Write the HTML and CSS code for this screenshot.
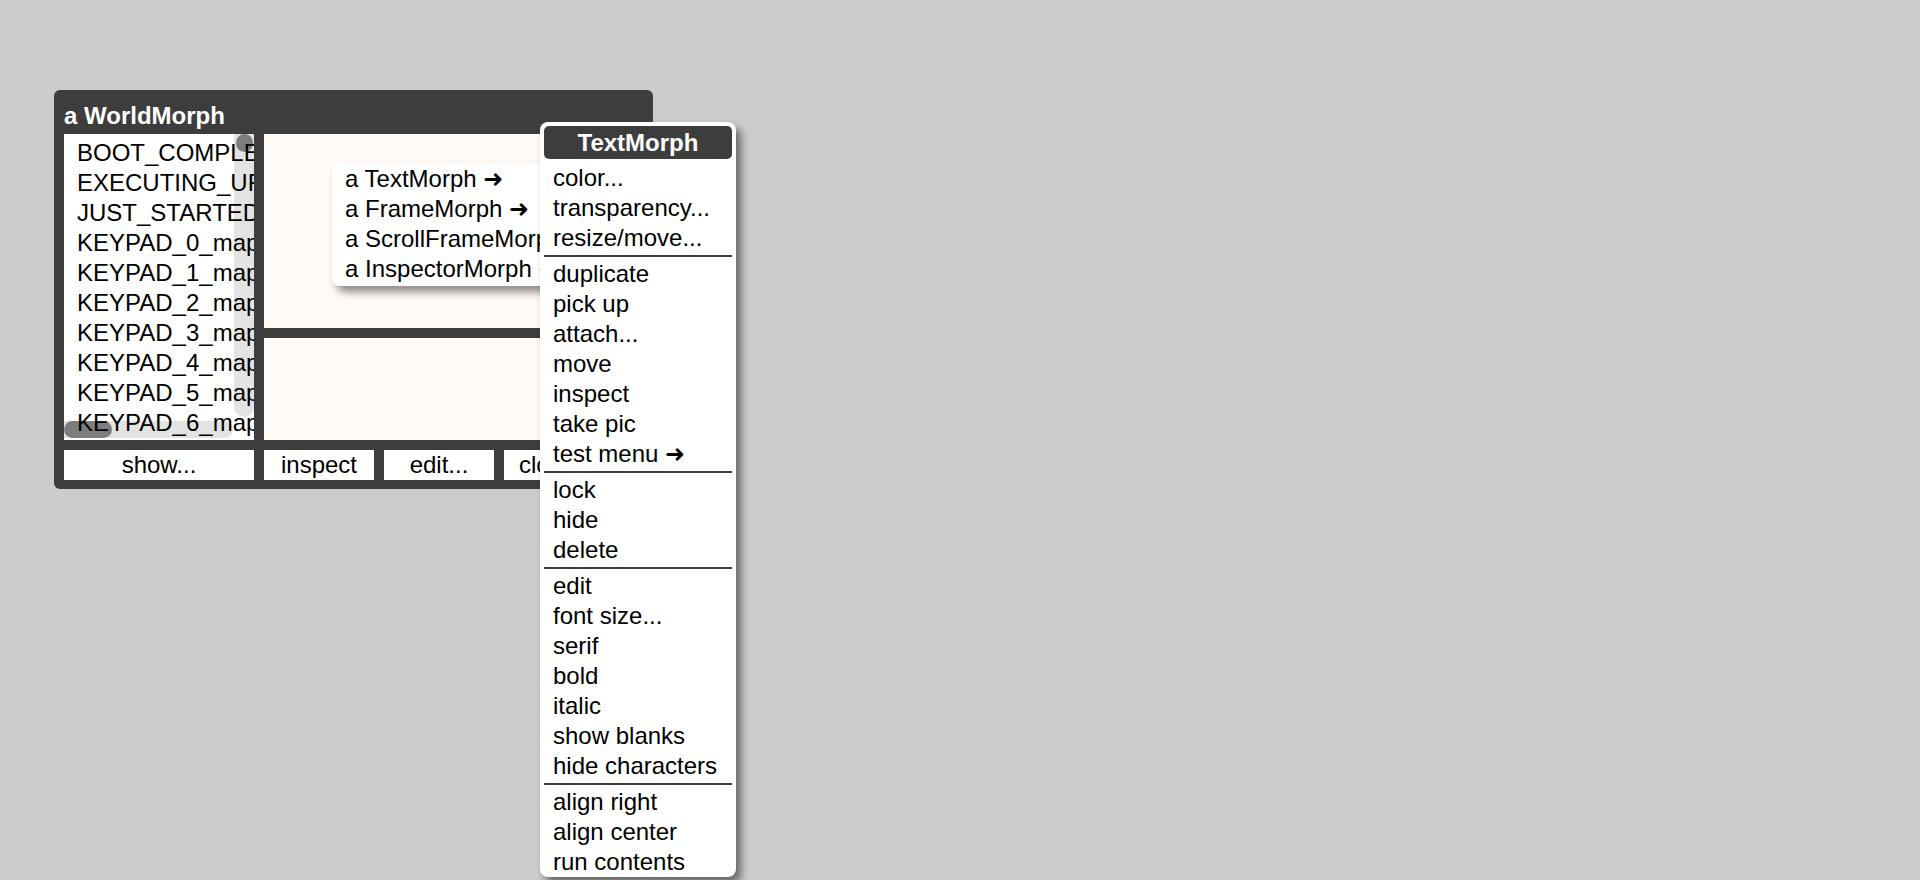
FILE: index.html
```html
<!DOCTYPE html>
<html>
<head>
<meta charset="utf-8">
<link rel="stylesheet" href="styles.css">
</head>
<body>
<div class="world">
  <div class="inspector">
    <div class="title">a WorldMorph</div>
    <div class="main">
      <div class="list">
        <div class="rows">
          <div class="row">BOOT_COMPLETED_ACTION</div>
          <div class="row">EXECUTING_URL_ACTION</div>
          <div class="row">JUST_STARTED_ACTION</div>
          <div class="row">KEYPAD_0_mappedToThaiKeyboard</div>
          <div class="row">KEYPAD_1_mappedToThaiKeyboard</div>
          <div class="row">KEYPAD_2_mappedToThaiKeyboard</div>
          <div class="row">KEYPAD_3_mappedToThaiKeyboard</div>
          <div class="row">KEYPAD_4_mappedToThaiKeyboard</div>
          <div class="row">KEYPAD_5_mappedToThaiKeyboard</div>
          <div class="row">KEYPAD_6_mappedToThaiKeyboard</div>
        </div>
        <div class="vtrack"><div class="vthumb"></div></div>
        <div class="htrack"><div class="hthumb"></div></div>
      </div>
      <div class="panes">
        <div class="pane pane-top"></div>
        <div class="pane pane-bottom"></div>
      </div>
    </div>
    <div class="buttons">
      <div class="btn btn-show">show...</div>
      <div class="btn btn-fixed">inspect</div>
      <div class="btn btn-fixed">edit...</div>
      <div class="btn btn-close">close</div>
    </div>
  </div>

  <div class="submenu">
    <div class="item">a TextMorph <span class="arrow">➜</span></div>
    <div class="item">a FrameMorph <span class="arrow">➜</span></div>
    <div class="item">a ScrollFrameMorph <span class="arrow">➜</span></div>
    <div class="item">a InspectorMorph <span class="arrow">➜</span></div>
  </div>

  <div class="menu">
    <div class="menu-title">TextMorph</div>
    <div class="item">color...</div>
    <div class="item">transparency...</div>
    <div class="item">resize/move...</div>
    <div class="sep"></div>
    <div class="item">duplicate</div>
    <div class="item">pick up</div>
    <div class="item">attach...</div>
    <div class="item">move</div>
    <div class="item">inspect</div>
    <div class="item">take pic</div>
    <div class="item">test menu <span class="arrow">➜</span></div>
    <div class="sep"></div>
    <div class="item">lock</div>
    <div class="item">hide</div>
    <div class="item">delete</div>
    <div class="sep"></div>
    <div class="item">edit</div>
    <div class="item">font size...</div>
    <div class="item">serif</div>
    <div class="item">bold</div>
    <div class="item">italic</div>
    <div class="item">show blanks</div>
    <div class="item">hide characters</div>
    <div class="sep"></div>
    <div class="item">align right</div>
    <div class="item">align center</div>
    <div class="item">run contents</div>
  </div>
</div>
</body>
</html>
```

FILE: styles.css
```css
html, body {
  margin: 0;
  padding: 0;
  background: #cccccc;
  width: 1920px;
  height: 880px;
  overflow: hidden;
}

.world {
  position: relative;
  width: 1920px;
  height: 880px;
  padding-top: 90px;
  padding-left: 54px;
  box-sizing: border-box;
  font-family: "Liberation Sans", Arial, Helvetica, sans-serif;
  font-size: 24px;
  color: #000;
}

.inspector {
  width: 599px;
  box-sizing: border-box;
  background: #3d3d3d;
  border-radius: 6px;
  padding: 10px 10px 9px 10px;
}

.title {
  color: #fff;
  font-weight: bold;
  line-height: 30px;
  height: 30px;
  margin-bottom: 4px;
  padding-top: 1px;
}

.main {
  display: flex;
  gap: 10px;
  height: 306px;
  margin-top: -1px;
}

.list {
  position: relative;
  width: 190px;
  background: #ffffff;
  overflow: hidden;
}

.rows {
  padding: 4px 0 0 13px;
  white-space: nowrap;
}

.row {
  line-height: 30px;
  height: 30px;
}

.vtrack {
  position: absolute;
  top: 0;
  right: 0;
  width: 20px;
  height: 283px;
  background: rgba(0, 0, 0, 0.11);
  border-radius: 0 0 10px 10px;
}

.vthumb {
  position: absolute;
  top: 0;
  right: 1px;
  width: 17px;
  height: 18px;
  border-radius: 9px;
  background: rgba(0, 0, 0, 0.45);
}

.htrack {
  position: absolute;
  left: 0;
  bottom: 2px;
  width: 169px;
  height: 17px;
  background: rgba(0, 0, 0, 0.11);
  border-radius: 0 9px 9px 0;
}

.hthumb {
  width: 48px;
  height: 17px;
  border-radius: 9px;
  background: rgba(0, 0, 0, 0.45);
}

.panes {
  flex: 1;
  display: flex;
  flex-direction: column;
  gap: 10px;
}

.pane {
  background: #fffaf5;
}

.pane-top {
  height: 194px;
}

.pane-bottom {
  flex: 1;
}

.buttons {
  display: flex;
  gap: 10px;
  margin-top: 10px;
}

.btn {
  background: #ffffff;
  height: 30px;
  line-height: 30px;
  text-align: center;
  white-space: nowrap;
  overflow: hidden;
}

.btn-show {
  width: 190px;
}

.btn-fixed {
  width: 110px;
}

.btn-close {
  flex: 1;
  text-align: left;
  padding-left: 15px;
}

.item {
  height: 30px;
  line-height: 30px;
  padding-left: 13px;
  white-space: nowrap;
}

.arrow {
  font-family: "DejaVu Sans", sans-serif;
  font-weight: bold;
}

.submenu {
  position: absolute;
  left: 332px;
  top: 163px;
  width: 250px;
  padding: 1px 0 2px 0;
  background: #ffffff;
  border-radius: 8px;
  box-shadow: 5px 6px 8px rgba(0, 0, 0, 0.45);
}

.menu {
  position: absolute;
  left: 540px;
  top: 122px;
  width: 196px;
  height: 755px;
  box-sizing: border-box;
  padding-top: 4px;
  background: #ffffff;
  border-radius: 8px;
  box-shadow: 5px 6px 9px rgba(0, 0, 0, 0.5);
  overflow: hidden;
}

.menu-title {
  margin: 0 4px 4px 4px;
  height: 33px;
  line-height: 33px;
  background: #3d3d3d;
  border-radius: 5px;
  color: #fff;
  font-weight: bold;
  text-align: center;
}

.sep {
  height: 2px;
  margin: 2px 4px;
  background: #3d3d3d;
}
```
